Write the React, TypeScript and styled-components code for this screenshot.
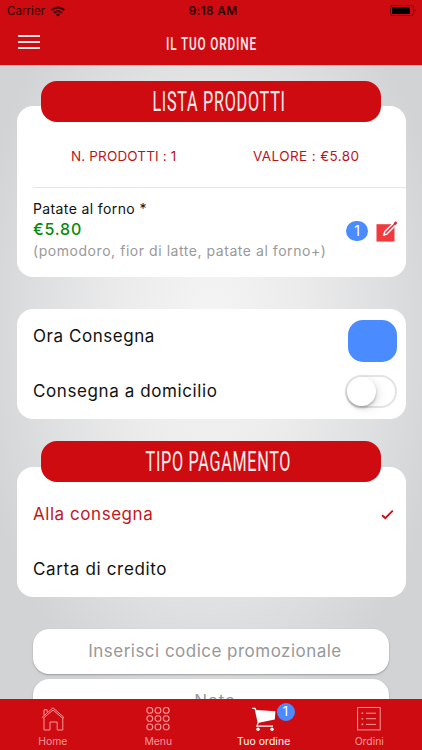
import React from 'react';
import styled, { createGlobalStyle } from 'styled-components';

const RED = '#ce0b11';
const BLUE = '#4a8bff';

const Global = createGlobalStyle`
  * { box-sizing: border-box; }
  body { margin: 0; background: ${RED}; }
`;

const Screen = styled.div`
  width: 422px;
  height: 750px;
  overflow: hidden;
  display: flex;
  flex-direction: column;
  font-family: Inter, sans-serif;
  color: #111;
`;

const Header = styled.header`
  flex: 0 0 65px;
  background: ${RED};
`;

const StatusBar = styled.div`
  height: 21px;
  display: grid;
  grid-template-columns: 1fr auto 1fr;
  align-items: center;
  padding: 1px 6px 0 7px;
  font-size: 11.6px;
  color: #2c0203;
`;

const Carrier = styled.div`
  display: flex;
  align-items: center;
  gap: 6px;
`;

const Clock = styled.span`
  font-weight: 600;
  font-size: 11.8px;
  letter-spacing: 0.35px;
  padding-left: 3px;
`;

const BatteryIcon = styled.svg`
  justify-self: end;
  display: block;
  margin-top: -2px;
`;

const TitleBar = styled.div`
  height: 42px;
  display: grid;
  grid-template-columns: 40px 1fr 40px;
  align-items: center;
  padding-left: 18px;
  padding-right: 18px;
`;

const MenuButton = styled.button`
  border: 0;
  padding: 0;
  background: none;
  width: 22px;
  height: 14px;
  display: flex;
  flex-direction: column;
  justify-content: space-between;
`;

const MenuLine = styled.span`
  width: 22px;
  height: 2px;
  background: #fbe3e3;
`;

const Condensed = styled.span<{ $size: number; $scale: number; $gap: number; $weight?: number }>`
  display: block;
  font-family: Roboto, sans-serif;
  font-size: ${p => p.$size}px;
  font-weight: ${p => p.$weight ?? 400};
  letter-spacing: ${p => p.$gap}px;
  margin-right: ${p => -p.$gap}px;
  line-height: 1;
  white-space: nowrap;
  color: #fdecec;
  transform: scaleX(${p => p.$scale});
`;

const TitleSlot = styled.div`
  display: flex;
  justify-content: center;
  padding-top: 2px;
`;

const Content = styled.main`
  flex: 1;
  min-height: 0;
  overflow: hidden;
  padding: 14.5px 17px 0 16.5px;
  border-top: 1px solid #dfb9bb;
  background: radial-gradient(ellipse 240px 400px at 50% 42%, #f5f5f5 0%, #ebebec 40%, #dedfe0 72%, #d2d3d5 100%);
`;

const Ribbon = styled.h2`
  position: relative;
  width: 340px;
  height: 41px;
  margin: 0 0 -15.5px 24.5px;
  padding: 2px 0 0 14px;
  display: flex;
  align-items: center;
  justify-content: center;
  border-radius: 16px;
  background: ${RED};
`;

const Card = styled.section<{ $height: number }>`
  width: 389px;
  height: ${p => p.$height}px;
  padding-left: 16.5px;
  border-radius: 16px;
  background: #fff;
`;

const Totals = styled.div`
  height: 82px;
  display: flex;
  align-items: flex-end;
  justify-content: space-between;
  padding: 0 46px 23.5px 38px;
  border-bottom: 1px solid #e6e6e6;
  font-size: 13.5px;
  line-height: 16px;
  color: #b9161b;
`;

const Spaced = styled.span<{ $gap: number }>`
  letter-spacing: ${p => p.$gap}px;
  white-space: nowrap;
`;

const Product = styled.div`
  display: flex;
  justify-content: space-between;
  padding: 11px 7.5px 0 0;
`;

const ProductText = styled.div`
  display: flex;
  flex-direction: column;
`;

const ProductName = styled.span`
  font-size: 14px;
  line-height: 20px;
  letter-spacing: 0.38px;
`;

const Price = styled.span`
  font-size: 16px;
  font-weight: 500;
  line-height: 21px;
  letter-spacing: 0.8px;
  color: #078a0b;
`;

const Ingredients = styled.span`
  font-size: 14px;
  line-height: 21px;
  letter-spacing: 0.55px;
  white-space: nowrap;
  color: #999;
`;

const ProductActions = styled.div`
  display: flex;
  align-items: flex-start;
  gap: 8px;
  padding-top: 22px;
`;

const Count = styled.span`
  width: 22px;
  height: 20px;
  border-radius: 10px;
  background: ${BLUE};
  color: #fff;
  font-size: 14px;
  line-height: 19px;
  text-align: center;
`;

const Row = styled.div<{ $red?: boolean }>`
  height: 55px;
  padding-right: 8.5px;
  display: flex;
  align-items: center;
  justify-content: space-between;
  font-size: 17px;
  color: ${p => (p.$red ? '#c4161c' : '#111')};
`;

const RowLabel = styled(Spaced)`
  margin-top: -1px;
`;

const TimeButton = styled.button`
  width: 49px;
  height: 42px;
  margin-top: 8px;
  border: 0;
  border-radius: 15px;
  background: ${BLUE};
`;

const Switch = styled.div`
  width: 52px;
  height: 33px;
  border: 2px solid #e4e4e4;
  border-radius: 17px;
  background: #fff;
`;

const Knob = styled.div`
  width: 29px;
  height: 29px;
  border-radius: 50%;
  background: #fff;
  box-shadow: 0 2px 3px rgba(0, 0, 0, 0.25), 3px 3px 9px rgba(0, 0, 0, 0.1);
`;

const Gap = styled.div<{ $h: number }>`
  height: ${p => p.$h}px;
`;

const Field = styled.div`
  width: 356px;
  height: 44.5px;
  margin: 0 0 5.5px 16.5px;
  padding-left: 8px;
  padding-bottom: 1px;
  display: flex;
  align-items: center;
  justify-content: center;
  border-radius: 16px;
  background: #fff;
  box-shadow: 0 1px 2px rgba(0, 0, 0, 0.28);
  font-size: 17px;
  color: #989898;
`;

const TabBar = styled.nav`
  flex: 0 0 51px;
  display: grid;
  grid-template-columns: repeat(4, 1fr);
  border-top: 1px solid #b5161a;
  background: ${RED};
`;

const Tab = styled.div<{ $active?: boolean }>`
  position: relative;
  display: flex;
  flex-direction: column;
  align-items: center;
  padding-top: 7px;
  font-size: 10.4px;
  line-height: 13px;
  letter-spacing: ${p => (p.$active ? '0.1px' : '0')};
  color: ${p => (p.$active ? '#fff' : '#f59a9c')};

  svg { display: block; margin-bottom: 4px; }
`;

const TabBadge = styled.span`
  position: absolute;
  left: 65.5px;
  top: 3px;
  width: 18px;
  height: 18px;
  border-radius: 9px;
  background: ${BLUE};
  color: #fff;
  font-size: 13px;
  line-height: 17px;
  text-align: center;
`;

const WifiIcon = () => (
  <svg width="14" height="11" viewBox="0 0 14 11" fill="none" stroke="#2c0203" strokeWidth="2">
    <path d="M0.8 4.2C4.3 0.7 9.7 0.7 13.2 4.2" />
    <path d="M3.1 6.7C5.3 4.6 8.7 4.6 10.9 6.7" />
    <path d="M7 10.6L4.9 8.4C6.1 7.3 7.9 7.3 9.1 8.4Z" fill="#2c0203" stroke="none" />
  </svg>
);

const EditIcon = () => (
  <svg width="22" height="22" viewBox="0 0 22 22">
    <path d="M0.5 3.2H18.5V20.6H0.5Z" fill="#f03a3e" />
    <path d="M7.6 14.3L8.9 10.6L18.6 1L20.8 3.1L11.2 12.8Z" fill="#f03a3e" stroke="#fff" strokeWidth="1.4" strokeLinejoin="round" />
    <path d="M17.6 2.2L19.6 0.2L21.4 1.9L19.4 3.9Z" fill="#d8282d" />
  </svg>
);

const HomeIcon = () => (
  <svg width="24" height="24" viewBox="0 0 24 24" fill="none" stroke="#f59a9c" strokeWidth="1">
    <path d="M1.3 10.2L12 0.8L22.7 10.2L21.8 11.3L12 3L2.2 11.3Z" />
    <path d="M3 8.3V2.8H6.2V5.5" />
    <path d="M3 11V23H9V15H16.2V23H21.8V11" />
  </svg>
);

const GridIcon = () => (
  <svg width="24" height="24" viewBox="0 0 24 24" fill="none" stroke="#f59a9c" strokeWidth="1.1">
    {[3.4, 11.6, 19.9].map(y => [3.8, 12, 20.2].map(x => <circle key={`${x}-${y}`} cx={x} cy={y} r="2.9" />))}
  </svg>
);

const CartIcon = () => (
  <svg width="24" height="24" viewBox="0 0 24 24" fill="#fff">
    <path d="M0.3 0.8H3.4L4.5 3L23.4 4.2L22.8 12.6L6.8 15.8L5.8 18.4H21V19.8H4L5.6 15.6L2.6 2H0.3Z" />
    <circle cx="6" cy="22.2" r="1.7" />
    <circle cx="20" cy="22.2" r="1.7" />
  </svg>
);

const ListIcon = () => (
  <svg width="24" height="24" viewBox="0 0 24 24" fill="none" stroke="#f59a9c" strokeWidth="1">
    <rect x="0.6" y="0.5" width="22.6" height="22.4" />
    <path d="M9 6.2H19M9 11.7H19M9 17.4H19" />
    <path d="M4.6 6.2H6.2M4.6 11.7H6.2M4.6 17.4H6.2" strokeWidth="1.6" />
  </svg>
);

export default function App() {
  return (
    <Screen>
      <Global />
      <Header>
        <StatusBar>
          <Carrier>Carrier <WifiIcon /></Carrier>
          <Clock>9:18 AM</Clock>
          <BatteryIcon width="26" height="11" viewBox="0 0 26 11">
            <rect x="0.5" y="0.5" width="23" height="10" rx="2" fill="none" stroke="#7a060a" />
            <rect x="2" y="2" width="18" height="7" fill="#000" />
            <path d="M24.7 3.7Q26.4 5.5 24.7 7.3Z" fill="#7a060a" />
          </BatteryIcon>
        </StatusBar>
        <TitleBar>
          <MenuButton aria-label="Menu"><MenuLine /><MenuLine /><MenuLine /></MenuButton>
          <TitleSlot><Condensed $size={19} $scale={0.62} $gap={1.4} $weight={500}>IL TUO ORDINE</Condensed></TitleSlot>
        </TitleBar>
      </Header>

      <Content>
        <Ribbon><Condensed $size={27} $scale={0.6} $gap={1.2}>LISTA PRODOTTI</Condensed></Ribbon>
        <Card $height={171}>
          <Totals>
            <Spaced $gap={0.15}>N. PRODOTTI : 1</Spaced>
            <Spaced $gap={0.4}>VALORE : €5.80</Spaced>
          </Totals>
          <Product>
            <ProductText>
              <ProductName>Patate al forno *</ProductName>
              <Price>€5.80</Price>
              <Ingredients>(pomodoro, fior di latte, patate al forno+)</Ingredients>
            </ProductText>
            <ProductActions>
              <Count>1</Count>
              <EditIcon />
            </ProductActions>
          </Product>
        </Card>

        <Gap $h={32} />
        <Card $height={109.5}>
          <Row>
            <RowLabel $gap={0.55}>Ora Consegna</RowLabel>
            <TimeButton aria-label="Ora Consegna" />
          </Row>
          <Row>
            <RowLabel $gap={0.6}>Consegna a domicilio</RowLabel>
            <Switch><Knob /></Switch>
          </Row>
        </Card>

        <Gap $h={22.5} />
        <Ribbon><Condensed $size={27} $scale={0.6} $gap={1.15}>TIPO PAGAMENTO</Condensed></Ribbon>
        <Card $height={130.5}>
          <Gap $h={20} />
          <Row $red>
            <RowLabel $gap={0.55}>Alla consegna</RowLabel>
            <svg width="16" height="14" viewBox="0 0 16 14" fill="none" stroke="#c4161c" strokeWidth="2">
              <path d="M1 8.3L4.3 11.1L11.8 3.6" />
            </svg>
          </Row>
          <Row><RowLabel $gap={0.65}>Carta di credito</RowLabel></Row>
        </Card>

        <Gap $h={32} />
        <Field><Spaced $gap={0.48}>Inserisci codice promozionale</Spaced></Field>
        <Field><Spaced $gap={0.8}>Note</Spaced></Field>
      </Content>

      <TabBar>
        <Tab><HomeIcon />Home</Tab>
        <Tab><GridIcon />Menu</Tab>
        <Tab $active><CartIcon />Tuo ordine<TabBadge>1</TabBadge></Tab>
        <Tab><ListIcon />Ordini</Tab>
      </TabBar>
    </Screen>
  );
}
